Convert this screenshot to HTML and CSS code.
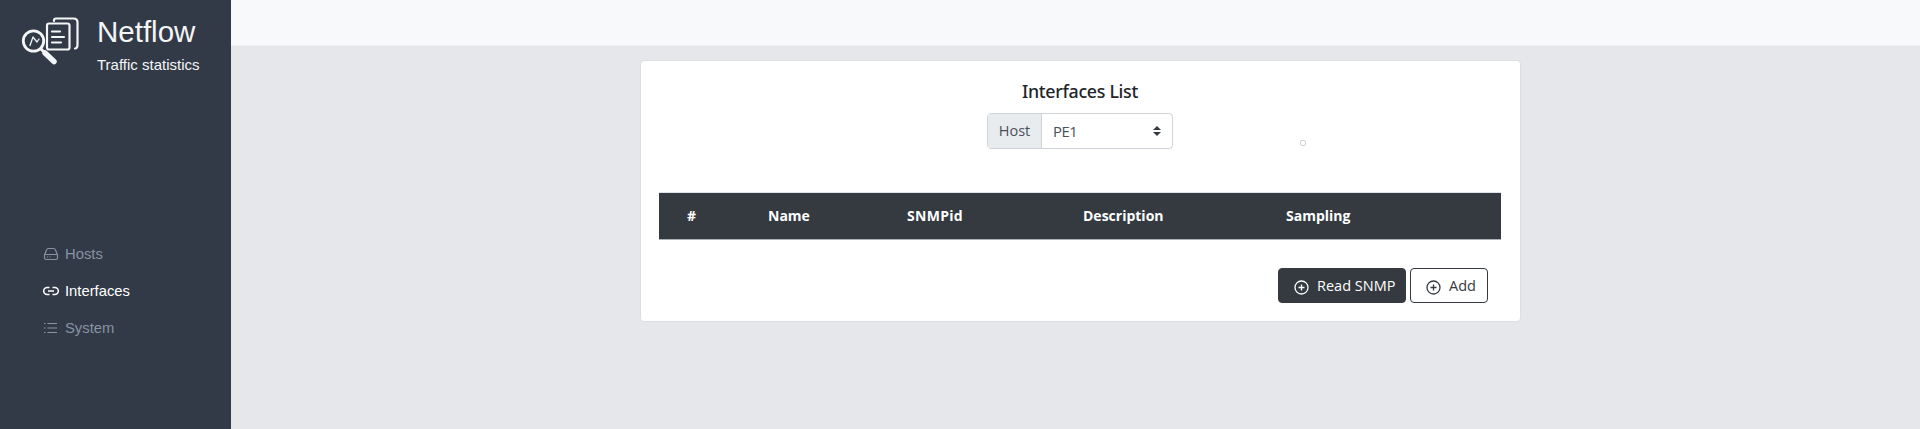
FILE: index.html
```html
<!DOCTYPE html>
<html lang="en">
<head>
<meta charset="utf-8">
<title>Netflow</title>
<link rel="stylesheet" href="styles.css">
</head>
<body>
<aside class="sidebar">
  <div class="brand">
    <svg class="logo" width="60" height="50" viewBox="0 0 60 50" fill="none" stroke="#f3f5f7" stroke-linecap="round" stroke-linejoin="round">
      <path d="M34 5v-1q0-1.500 2-1.500h17.500q4 0 4 4v22q0 4-2.500 4" stroke-width="2.200"/>
      <rect x="27" y="7.500" width="22.500" height="26" rx="2" stroke-width="2.200"/>
      <path d="M32 15.500h8M32 21h12M32 26.500h9" stroke-width="2.200"/>
      <circle cx="13.500" cy="25" r="10.200" stroke-width="2.800"/>
      <path d="M10 29.500l3-8.500 4 5 2-3" stroke-width="1.300"/>
      <path d="M21 33l3 3" stroke-width="3"/>
      <path d="M25 37l9 8.500" stroke-width="5.500"/>
    </svg>
    <div class="brand-text">
      <div class="brand-name">Netflow</div>
      <div class="brand-sub">Traffic statistics</div>
    </div>
  </div>
  <nav class="menu">
    <a class="menu-item">
      <svg width="16" height="16" viewBox="0 0 16 16" fill="none" stroke="currentColor" stroke-width="1.200" stroke-linejoin="round"><path d="M1.500 9 3.500 4Q4 2.500 5.300 2.500h5.400Q12 2.500 12.500 4l2 5v3q0 1.500-1.500 1.500H3q-1.500 0-1.500-1.500zM2 8.500h12"/><path d="M4 11h1M6.500 11h1"/></svg>
      <span>Hosts</span>
    </a>
    <a class="menu-item active">
      <svg width="16" height="16" viewBox="0 0 16 16" fill="none" stroke="currentColor" stroke-width="1.500"><path d="M6.500 4.500H4.200a3.500 3.500 0 0 0 0 7h2.300M9.500 4.500h2.300a3.500 3.500 0 0 1 0 7H9.500M5 8h6"/></svg>
      <span>Interfaces</span>
    </a>
    <a class="menu-item">
      <svg width="16" height="16" viewBox="0 0 16 16" fill="none" stroke="currentColor" stroke-width="1.200"><path d="M4.500 3.500h9.500M4.500 8h9.500M4.500 12.500h9.500M1 3.500h1.500M1 8h1.500M1 12.500h1.500"/></svg>
      <span>System</span>
    </a>
  </nav>
</aside>
<div class="main">
  <header class="topbar"></header>
  <main class="content">
    <section class="card">
      <h1 class="title">Interfaces List</h1>
      <div class="picker">
        <div class="input-group">
          <span class="addon">Host</span>
          <div class="select"><span>PE1</span>
            <svg width="8" height="10" viewBox="0 0 8 10" fill="#343a40"><path d="M0 4 4 0l4 4zM0 6h8l-4 4z"/></svg>
          </div>
        </div>
        <span class="status-dot"></span>
      </div>
      <div class="table-head">
        <span>#</span><span>Name</span><span class="col-id">SNMPid</span><span>Description</span><span>Sampling</span>
      </div>
      <div class="actions">
        <button class="btn btn-dark"><svg width="15" height="15" viewBox="0 0 15 15" fill="none" stroke="currentColor" stroke-width="1.300"><circle cx="7.500" cy="7.500" r="6.500"/><path d="M7.500 4.500v6M4.500 7.500h6"/></svg><span>Read SNMP</span></button>
        <button class="btn btn-outline"><svg width="15" height="15" viewBox="0 0 15 15" fill="none" stroke="currentColor" stroke-width="1.300"><circle cx="7.500" cy="7.500" r="6.500"/><path d="M7.500 4.500v6M4.500 7.500h6"/></svg><span>Add</span></button>
      </div>
    </section>
  </main>
</div>
</body>
</html>
```
FILE: styles.css
```css
* { box-sizing: border-box; }
body {
  margin: 0;
  height: 429px;
  display: flex;
  overflow: hidden;
  background: #e6e7eb;
  font-family: "Open Sans", "Noto Sans", sans-serif;
  font-size: 15px;
  color: #212529;
}
.sidebar {
  width: 231px;
  background: #323a47;
  font-family: "Liberation Sans", Arial, sans-serif;
  color: #f4f5f7;
}
.brand { display: flex; height: 235px; padding: 16px 0 0 20px; }
.logo { flex: none; }
.brand-text { padding-left: 17px; white-space: nowrap; }
.brand-name { font-size: 29.5px; line-height: 32px; }
.brand-sub { padding-top: 8px; font-size: 15px; line-height: 17px; }
.menu-item {
  display: flex;
  align-items: center;
  gap: 6px;
  height: 37px;
  padding-left: 43px;
  font-size: 14.8px;
  color: #8792a2;
}
.menu-item.active { color: #fff; }
.main { flex: 1; }
.topbar { height: 46px; background: #f8f9fb; border-bottom: 1px solid #eef0f3; }
.content { display: flex; justify-content: center; padding: 14px 0 0 9px; }
.card {
  width: 881px;
  height: 262px;
  margin-left: 1px;
  background: #fff;
  border: 1px solid #dcdde0;
  border-radius: 4px;
  padding: 18px 19px 0 18px;
}
.title {
  margin: 0;
  height: 34px;
  font-family: "Noto Sans", "Open Sans", sans-serif;
  font-size: 17.8px;
  font-weight: 500;
  line-height: 24px;
  text-align: center;
  letter-spacing: -0.3px;
}
.picker { display: flex; height: 79px; padding-left: 328px; }
.input-group {
  display: flex;
  width: 186px;
  height: 36px;
  border: 1px solid #ced4da;
  border-radius: 4px;
  color: #495057;
}
.addon {
  width: 54px;
  background: #e9ecef;
  border-right: 1px solid #ced4da;
  line-height: 34px;
  text-align: center;
  font-size: 14.5px;
}
.select {
  flex: 1;
  display: flex;
  align-items: center;
  justify-content: space-between;
  padding: 0 11px;
  font-size: 14.8px;
  letter-spacing: -0.4px;
}
.status-dot { width: 6px; height: 6px; margin: 27px 0 0 127px; border: 1px solid #cdd2d8; border-radius: 2px; }
.table-head {
  display: grid;
  grid-template-columns: 81px 139px 176px 203px 1fr;
  height: 48px;
  padding-left: 28px;
  background: #343a40;
  border-top: 1px solid #dee2e6;
  border-bottom: 1px solid #a9b1b9;
  color: #fff;
  font-size: 14px;
  font-weight: 700;
  line-height: 46px;
}
.col-id { letter-spacing: 0.3px; }
.actions { display: flex; justify-content: flex-end; gap: 4px; padding: 28px 13px 0 0; }
.btn {
  display: flex;
  align-items: center;
  gap: 8px;
  height: 35px;
  padding: 0 0 0 15px;
  border: 1px solid #343a40;
  border-radius: 4px;
  font: 14.5px/20px "Open Sans", "Noto Sans", sans-serif;
  white-space: nowrap;
}
.btn svg { flex: none; margin-top: 3px; }
.btn-dark { width: 128px; background: #343a40; color: #fff; }
.btn-outline { width: 78px; background: #fff; color: #343a40; }
```
